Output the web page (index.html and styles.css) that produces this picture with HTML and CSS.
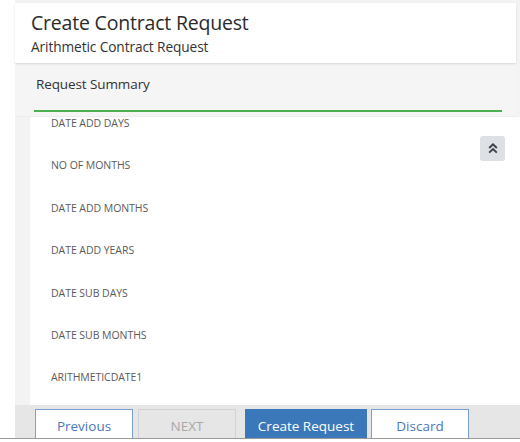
FILE: index.html
```html
<!DOCTYPE html>
<html>
<head>
<meta charset="utf-8">
<link rel="stylesheet" href="styles.css">
</head>
<body>
<div class="panel">
  <div class="header">
    <div class="title">Create Contract Request</div>
    <div class="subtitle">Arithmetic Contract Request</div>
  </div>
  <div class="band">
    <div class="band-title">Request Summary</div>
    <div class="band-line"></div>
  </div>
  <div class="content">
    <div class="list">
      <div class="item">DATE ADD DAYS</div>
      <div class="item">NO OF MONTHS</div>
      <div class="item">DATE ADD MONTHS</div>
      <div class="item">DATE ADD YEARS</div>
      <div class="item">DATE SUB DAYS</div>
      <div class="item">DATE SUB MONTHS</div>
      <div class="item">ARITHMETICDATE1</div>
    </div>
    <button class="scroll-top" type="button" aria-label="Scroll to top">
      <svg width="10" height="11" viewBox="0 0 10 11"><path d="M1.2 5 L5 1.4 L8.8 5 M1.2 9.6 L5 6 L8.8 9.6" fill="none" stroke="#3a3f47" stroke-width="1.9"/></svg>
    </button>
  </div>
  <div class="footer">
    <button class="btn btn-outline" type="button">Previous</button>
    <button class="btn btn-disabled" type="button">NEXT</button>
    <button class="btn btn-primary" type="button">Create Request</button>
    <button class="btn btn-outline" type="button">Discard</button>
  </div>
</div>
<div class="bottom-line"></div>
</body>
</html>
```
FILE: styles.css
```css
* { box-sizing: border-box; }
html, body { margin: 0; padding: 0; background: #ffffff; }
body {
  font-family: "Open Sans", "Noto Sans", "Liberation Sans", sans-serif;
  color: #333;
  width: 520px;
  height: 442px;
  overflow: hidden;
}
.panel {
  margin-left: 15px;
  width: 505px;
  padding-top: 3px;
  background: #f3f3f3;
}
.header {
  width: 501px;
  height: 60px;
  background: #ffffff;
  padding: 7px 0 0 16px;
  box-shadow: 0 1px 2px rgba(0,0,0,0.12);
  position: relative;
  z-index: 1;
}
.title {
  font-size: 19.5px;
  line-height: 26px;
  color: #2b2b2b;
  letter-spacing: -0.2px;
}
.subtitle {
  font-size: 13.7px;
  line-height: 20px;
  color: #333;
  margin-top: 1px;
  letter-spacing: -0.1px;
}
.band {
  width: 501px;
  height: 54px;
  background: #f5f5f5;
  padding: 11px 14px 0 19px;
  border-bottom: 1px solid #ececec;
}
.band-title {
  font-size: 13.5px;
  line-height: 20px;
  color: #333;
  letter-spacing: -0.1px;
  padding-left: 2px;
}
.band-line {
  margin-top: 16px;
  height: 2px;
  background: #4caf50;
}
.content {
  margin-left: 15px;
  width: 490px;
  height: 288px;
  background: #ffffff;
  position: relative;
  overflow: hidden;
}
.list {
  display: flex;
  flex-direction: column;
  gap: 32.4px;
  padding: 1px 0 0 21px;
}
.item {
  height: 10px;
  display: flex;
  align-items: center;
  font-size: 10.5px;
  line-height: 10px;
  color: #5a5a5a;
  letter-spacing: -0.05px;
}
.scroll-top {
  position: absolute;
  top: 19px;
  right: 15px;
  width: 25px;
  height: 25px;
  border: none;
  border-radius: 3px;
  background: #dde0e5;
  padding: 0;
  display: flex;
  align-items: center;
  justify-content: center;
}
.footer {
  height: 33px;
  background: #e6e6e6;
  display: flex;
  align-items: flex-start;
  padding: 4px 0 0 20px;
  gap: 5px;
  overflow: hidden;
}
.btn {
  height: 34px;
  flex: none;
  font-family: "Open Sans", "Noto Sans", "Liberation Sans", sans-serif;
  font-size: 13.5px;
  padding: 0;
  display: flex;
  align-items: center;
  justify-content: center;
  border-radius: 0;
}
.btn-outline {
  width: 98px;
  background: #ffffff;
  border: 1px solid #7a9fd3;
  color: #4a78bd;
}
.btn-disabled {
  width: 98px;
  background: #e6e6e6;
  border: 1px solid #d2d2d2;
  color: #a8a8a8;
  margin-right: 4px;
}
.btn-primary {
  width: 122px;
  background: #3b78b9;
  border: 1px solid #3b78b9;
  color: #ffffff;
  margin-right: -1px;
}
.bottom-line {
  height: 1px;
  background: #9a9a9a;
}
```
